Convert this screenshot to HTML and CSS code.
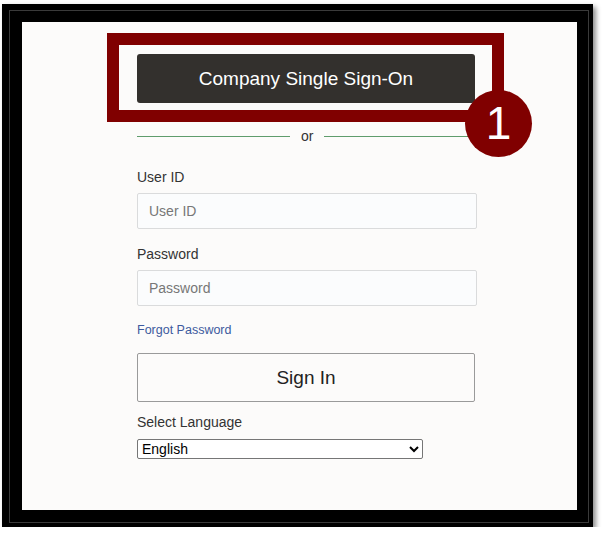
FILE: index.html
```html
<!DOCTYPE html>
<html lang="en">
<head>
    <meta charset="UTF-8">
    <meta name="viewport" content="width=device-width, initial-scale=1.0">
    <title>Sign In</title>
    <link rel="stylesheet" href="styles.css">
</head>
<body>
    <div class="frame">
        <div class="frame-inner">
            <div class="card">
                <button class="sso-button" type="button">Company Single Sign-On</button>

                <div class="divider">
                    <span class="divider-line"></span>
                    <span class="divider-text">or</span>
                    <span class="divider-line"></span>
                </div>

                <form id="loginForm" class="login-form">
                    <label for="userId">User ID</label>
                    <input type="text" id="userId" name="userId" placeholder="User ID">

                    <label for="password">Password</label>
                    <input type="password" id="password" name="password" placeholder="Password">

                    <a href="#" class="forgot">Forgot Password</a>

                    <button type="submit" class="signin-button">Sign In</button>

                    <label for="language">Select Language</label>
                    <select id="language" name="language">
                        <option>English</option>
                    </select>
                </form>
            </div>
        </div>

        <!-- Marcação do passo 1 -->
        <div class="highlight"></div>
        <div class="step-badge">1</div>
    </div>
</body>
</html>
```

FILE: styles.css
```css
body {
    margin: 0;
    padding: 0;
    background-color: #fff;
    font-family: "Liberation Sans", Arial, sans-serif;
}

.frame {
    position: relative;
    margin: 4px 0 0 2px;
    width: 591px;
    height: 523px;
    box-sizing: border-box;
    padding: 6px 4px 4px 7px;
    background-color: #000;
    box-shadow: 3px 3px 5px rgba(0, 0, 0, 0.45);
}

.frame-inner {
    height: 100%;
    box-sizing: border-box;
    border: 1px solid #3a3a3a;
    padding: 11px 11px 12px 12px;
}

.card {
    height: 100%;
    box-sizing: border-box;
    background-color: #fcfbfa;
    padding: 32px 0 0 115px;
}

.sso-button {
    display: block;
    width: 338px;
    height: 49px;
    background-color: #33302d;
    color: #fff;
    border: none;
    border-radius: 3px;
    font-family: "Liberation Sans", Arial, sans-serif;
    font-size: 19px;
    cursor: pointer;
}

.divider {
    display: flex;
    align-items: center;
    width: 338px;
    height: 18px;
    margin-top: 24px;
}

.divider-line {
    flex: 1;
    height: 1px;
    background-color: #5f9c6c;
}

.divider-line:first-child {
    flex: 0 0 153px;
}

.divider-text {
    padding: 0 11px;
    font-size: 14px;
    color: #333;
}

.login-form {
    display: flex;
    flex-direction: column;
    align-items: flex-start;
    margin-top: 24px;
}

label {
    font-size: 14px;
    line-height: 17px;
    color: #333;
    margin-bottom: 7px;
}

input[type="text"],
input[type="password"] {
    width: 340px;
    height: 36px;
    box-sizing: border-box;
    padding: 0 11px;
    margin-bottom: 17px;
    border: 1px solid #dadbdc;
    border-radius: 2px;
    background-color: #fbfcfd;
    font-family: "Liberation Sans", Arial, sans-serif;
    font-size: 14px;
    color: #333;
}

input::placeholder {
    color: #777;
}

.forgot {
    font-size: 12.5px;
    line-height: 15px;
    color: #3d5a9e;
    text-decoration: none;
}

.signin-button {
    width: 338px;
    height: 49px;
    margin: 15px 0 12px;
    background-color: #fcfbfa;
    border: 1px solid #9a9a9a;
    border-radius: 2px;
    font-family: "Liberation Sans", Arial, sans-serif;
    font-size: 19px;
    color: #222;
    cursor: pointer;
}

select {
    width: 286px;
    height: 20px;
    margin-top: 1px;
    font-family: "Liberation Sans", Arial, sans-serif;
    font-size: 14px;
    color: #000;
    background-color: #fff;
    border: 1px solid #767676;
    border-radius: 2px;
}

.highlight {
    position: absolute;
    left: 105px;
    top: 29px;
    width: 397px;
    height: 89px;
    box-sizing: border-box;
    border: 12px solid #800000;
}

.step-badge {
    position: absolute;
    left: 463px;
    top: 86px;
    width: 67px;
    height: 67px;
    border-radius: 50%;
    background-color: #800000;
    color: #fff;
    font-size: 46px;
    line-height: 67px;
    text-align: center;
}
```
